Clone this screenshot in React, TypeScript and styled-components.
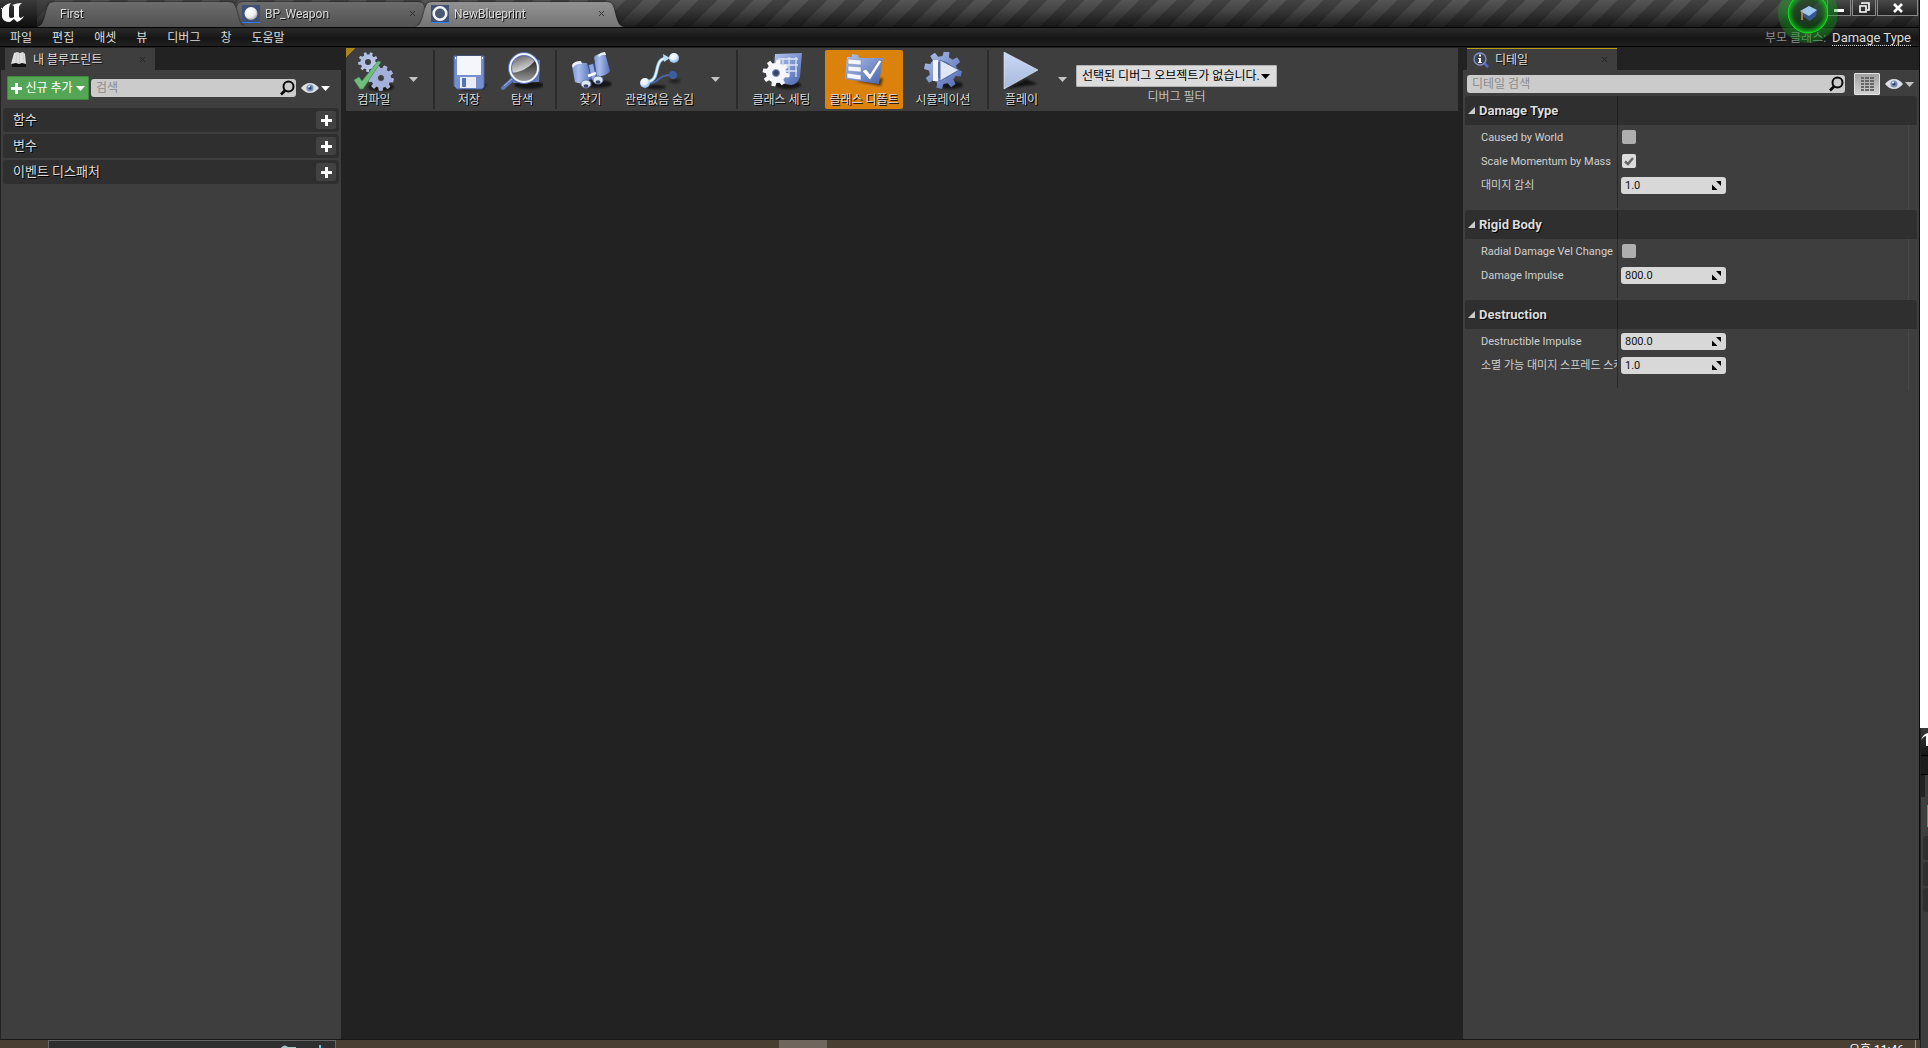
import React from "react";
import styled, { createGlobalStyle, css } from "styled-components";

const font = `Roboto, "Noto Sans CJK KR", sans-serif`;

const GlobalStyle = createGlobalStyle`
  *, *::before, *::after { box-sizing: border-box; }
  body { margin: 0; background: #fff; overflow: hidden; }
  button, input, select { font: inherit; color: inherit; }
  button { border: 0; padding: 0; background: none; cursor: pointer; }
  svg { display: block; flex: none; }
`;

/* ---------- shell ---------- */

const Desktop = styled.div`
  display: grid;
  grid-template-columns: minmax(0, 1fr) 8px;
  height: 100vh;
  overflow: hidden;
  font: 12px/16px ${font};
  color: #dcdcdc;
`;

const Screen = styled.div`
  display: flex;
  flex-direction: column;
  min-width: 0;
`;

const EditorWindow = styled.main`
  flex: 1;
  min-height: 0;
  display: flex;
  flex-direction: column;
  background: #222;
  border-right: 1px solid #0c0c0c;
  border-bottom: 1px solid #181818;
`;

/* ---------- title bar ---------- */

const TitleBar = styled.header`
  position: relative;
  display: flex;
  height: 28px;
  border-bottom: 1px solid #000;
  background:
    linear-gradient(#0000 0%, #0003 40%, #000a 100%),
    repeating-linear-gradient(135deg, #424242 0 13px, #555 13px 26px);
`;

const Brand = styled.div`
  width: 37px;
  height: 27px;
  padding-left: 1px;
  background: linear-gradient(#3a3a3a, #0e0e0e);
`;

const Tabs = styled.nav`
  display: flex;
  flex: 1;
  padding-top: 2px;
`;

const TabEdge = styled.div<{ $level: number }>`
  position: relative;
  z-index: ${(p) => p.$level};
  width: 209px;
  height: 25px;
  margin-right: -20px;
  filter: drop-shadow(0 0 1px #111);
`;

const TabBody = styled.div<{ $active?: boolean; $plain?: boolean }>`
  display: flex;
  align-items: center;
  gap: 5px;
  height: 25px;
  padding: 0 19px 2px ${(p) => (p.$plain ? 23 : 16)}px;
  clip-path: path("M0 25 C9 24 8 5 13 1 Q15 0 18 0 L191 0 Q194 0 196 1 C201 5 200 24 209 25 Z");
  background: ${(p) => (p.$active ? "linear-gradient(#929292, #747474)" : "linear-gradient(#6c6c6c, #525252)")};
`;

const TabTitle = styled.button`
  flex: 1;
  text-align: left;
  font-size: 12px;
  text-shadow: 1px 1px 0 #111;
`;

const CloseButton = styled.button`
  display: flex;
  opacity: 0.75;
`;

const WindowButtons = styled.div`
  display: flex;
  gap: 1px;
  height: 16px;
  padding-right: 1px;
`;

const WindowButton = styled.button<{ $wide?: boolean }>`
  display: flex;
  justify-content: center;
  align-items: center;
  width: ${(p) => (p.$wide ? 41 : 24)}px;
  height: 16px;
  border: 1px solid #8a8a8a;
  border-top: 0;
  background: linear-gradient(#4a4a4a, #222);
`;

const TutorialButton = styled.button`
  position: absolute;
  top: -17px;
  right: 81px;
  width: 60px;
  height: 60px;
`;

/* ---------- menu bar ---------- */

const MenuBar = styled.div`
  display: flex;
  justify-content: space-between;
  align-items: center;
  height: 19px;
  padding: 0 8px 0 10px;
  border-bottom: 1px solid #000;
  background: linear-gradient(#2a2a2a, #161616 55%, #202020);
`;

const MenuItems = styled.nav`
  display: flex;
  gap: 20px;
`;

const MenuItem = styled.button`
  padding-top: 2px;
  line-height: 16px;
`;

const ParentClass = styled.div`
  display: flex;
  gap: 6px;
  align-items: center;
  padding-top: 1px;
  color: #8c8c8c;
  line-height: 16px;
`;

const ClassLink = styled.a`
  font-size: 13px;
  line-height: 15px;
  color: #dcdcdc;
  text-decoration: none;
  border-bottom: 1px dotted #ddd;
`;

/* ---------- workspace ---------- */

const Workspace = styled.div`
  flex: 1;
  min-height: 0;
  display: flex;
  gap: 5px;
  padding: 1px 0 0 1px;
`;

const Dock = styled.section<{ $width: number }>`
  flex: none;
  display: flex;
  flex-direction: column;
  width: ${(p) => p.$width}px;
`;

const PanelTab = styled.div<{ $focused?: boolean }>`
  display: flex;
  align-items: center;
  gap: 6px;
  width: 150px;
  height: 22px;
  margin-left: 4px;
  padding: 0 9px 0 6px;
  background: #3e3e3e;
  border-top: 1px solid #3e3e3e;
  ${(p) =>
    p.$focused &&
    css`
      border-top-color: #b9a012;
    `}
`;

const PanelTitle = styled.h2`
  flex: 1;
  margin: 0;
  font-size: 12px;
  font-weight: 400;
  text-shadow: 1px 1px 0 #111;
`;

const PanelBody = styled.div`
  flex: 1;
  background: #3e3e3e;
`;

const SearchBar = styled.div<{ $tall?: boolean }>`
  display: flex;
  align-items: center;
  height: ${(p) => (p.$tall ? 38 : 26)}px;
  padding: ${(p) => (p.$tall ? "0 11px 2px 6px" : "2px 5px 0 4px")};
`;

const AddButton = styled.button`
  display: flex;
  align-items: center;
  justify-content: center;
  gap: 3px;
  width: 82px;
  height: 24px;
  margin-right: 2px;
  border: 1px solid #3d8a3f;
  border-radius: 1px;
  background: #54a656;
  color: #fff;
`;

const SearchField = styled.label`
  flex: 1;
  min-width: 0;
  display: flex;
  align-items: center;
  height: 18px;
  padding: 0 1px 0 5px;
  border-radius: 3px;
  background: #cbcbcb;
`;

const SearchInput = styled.input`
  flex: 1;
  min-width: 0;
  padding: 0;
  border: 0;
  outline: 0;
  background: none;
  color: #222;
  &::placeholder {
    color: #8c8c8c;
    opacity: 1;
  }
`;

const ViewButton = styled.button`
  display: flex;
  align-items: center;
  gap: 2px;
  margin-left: 5px;
`;

const ListButton = styled.button`
  display: flex;
  align-items: center;
  justify-content: center;
  width: 26px;
  height: 22px;
  margin-left: 9px;
  border: 1px solid #e4e4e4;
  border-radius: 1px;
  background: linear-gradient(#a2a2a2, #d0d0d0);
`;

const Sections = styled.ul`
  display: flex;
  flex-direction: column;
  gap: 2px;
  margin: 0;
  padding: 0 2px;
  list-style: none;
`;

const SectionRow = styled.li`
  display: flex;
  align-items: center;
  justify-content: space-between;
  height: 24px;
  padding: 0 3px 0 10px;
  border-radius: 3px;
  background: #2f2f2f;
  font-size: 13px;
  text-shadow: 1px 1px 0 #000;
`;

const PlusButton = styled.button`
  display: flex;
  align-items: center;
  justify-content: center;
  width: 20px;
  height: 18px;
  border-radius: 2px;
  background: #424242;
`;

/* ---------- toolbar ---------- */

const Center = styled.section`
  flex: 1;
  min-width: 0;
  display: flex;
  flex-direction: column;
`;

const Toolbar = styled.div`
  display: flex;
  align-items: flex-start;
  height: 63px;
  padding: 2px 0;
  background: linear-gradient(135deg, #a8861c 0 7px, #3e3e3e 7px);
`;

const ToolGroup = styled.div<{ $width?: number }>`
  display: flex;
  height: 59px;
  width: ${(p) => p.$width}px;
  & + & {
    border-left: 2px solid #2a2a2a;
  }
`;

const ToolButton = styled.button<{ $width: number; $selected?: boolean }>`
  flex: none;
  display: flex;
  flex-direction: column;
  align-items: center;
  width: ${(p) => p.$width}px;
  height: 59px;
  padding-top: 2px;
  border-radius: 2px;
  white-space: nowrap;
  text-shadow: 1px 1px 0 #000;
  background: ${(p) => (p.$selected ? "#da820c" : "none")};
`;

const ToolMenu = styled.button<{ $width: number }>`
  display: flex;
  align-items: center;
  justify-content: center;
  width: ${(p) => p.$width}px;
  height: 59px;
`;

const DebugFilter = styled.div`
  display: flex;
  flex-direction: column;
  align-items: center;
  gap: 2px;
  padding: 15px 0 0 6px;
  color: #c0c0c0;
`;

const SelectWrap = styled.div`
  position: relative;
  width: 201px;
  & > svg {
    position: absolute;
    top: 9px;
    right: 7px;
    pointer-events: none;
  }
`;

const DebugSelect = styled.select`
  display: block;
  width: 100%;
  height: 22px;
  padding: 0 4px 0 5px;
  border: 1px solid #b2b2b2;
  border-radius: 1px;
  appearance: none;
  background: #dcdcdc;
  color: #000;
`;

const Viewport = styled.div`
  flex: 1;
  background: #222;
`;

/* ---------- details ---------- */

const Properties = styled.div`
  padding: 0 2px;
`;

const Category = styled.section`
  padding-bottom: 13px;
  background: linear-gradient(#282828, #282828) 152px 0 / 1px calc(100% - 2px) no-repeat,
    linear-gradient(#484848, #484848) calc(100% - 8px) 0 / 1px 100% no-repeat;
`;

const CategoryHeader = styled.h3`
  display: flex;
  align-items: center;
  gap: 4px;
  height: 29px;
  margin: 0;
  padding-left: 3px;
  border-radius: 3px 3px 0 0;
  background: linear-gradient(#1e1e1e, #1e1e1e) 152px 0 / 1px 100% no-repeat, #2f2f2f;
  font-size: 13px;
  font-weight: 700;
  text-shadow: 1px 1px 0 #000;
`;

const PropertyRow = styled.div`
  display: grid;
  grid-template-columns: 152px 1fr;
  align-items: center;
  height: 24px;
  font-size: 11px;
`;

const PropertyLabel = styled.label`
  padding: 1px 0 0 16px;
  overflow: hidden;
  white-space: nowrap;
  color: #d0d0d0;
`;

const PropertyValue = styled.div`
  display: flex;
  padding-left: 4px;
`;

const NumberBox = styled.div`
  display: flex;
  align-items: center;
  width: 105px;
  height: 17px;
  padding: 0 5px 0 4px;
  border-radius: 3px;
  background: #d8d8d8;
`;

const NumberInput = styled.input`
  flex: 1;
  min-width: 0;
  padding: 1px 0 0;
  border: 0;
  outline: 0;
  background: none;
  color: #111;
`;

const CheckWrap = styled.span`
  position: relative;
  display: block;
  width: 14px;
  height: 14px;
  margin-left: 1px;
  & > svg {
    position: absolute;
    inset: 0;
    pointer-events: none;
  }
  & > input:not(:checked) + svg {
    display: none;
  }
`;

const CheckInput = styled.input`
  display: block;
  appearance: none;
  width: 14px;
  height: 14px;
  margin: 0;
  border-radius: 2px;
  background: #aeaeae;
  &:checked {
    background: #dcdcdc;
  }
`;

/* ---------- taskbar and neighbouring window ---------- */

const Taskbar = styled.footer`
  display: flex;
  height: 8px;
  padding-left: 48px;
  overflow: hidden;
  background: #483e32;
`;

const TaskSearch = styled.div`
  display: flex;
  justify-content: flex-end;
  gap: 20px;
  width: 288px;
  padding: 4px 13px 0 0;
  border: 1px solid #666;
  border-bottom: 0;
  background: #2f2f2f;
`;

const TaskItem = styled.div`
  width: 48px;
  margin-left: 443px;
  background: #6f665e;
`;

const Clock = styled.time`
  height: 8px;
  margin-left: auto;
  padding: 2px 11px 0 0;
  margin-right: 4px;
  border-right: 1px solid #9a9184;
  line-height: 16px;
  color: #fff;
`;

const Beside = styled.div`
  display: flex;
  flex-direction: column;
  justify-content: flex-end;
  overflow: hidden;
`;

const BesideWindow = styled.div`
  height: 320px;
  background: #3e3e3e;
  border-left: 1px solid #222;
`;

const BesideTitle = styled.div`
  height: 28px;
  border-bottom: 1px solid #000;
  background: linear-gradient(#3a3a3a, #151515);
`;

const BesideMenu = styled.div`
  height: 19px;
  border-bottom: 1px solid #000;
  background: #1c1c1c;
`;

const BesideTab = styled.div`
  width: 4px;
  height: 22px;
  margin-bottom: 8px;
  background: #222;
`;

const BesideAdd = styled.div`
  width: 1px;
  height: 22px;
  margin: 0 0 9px auto;
  background: #54a656;
`;

const BesideRow = styled.div`
  height: 24px;
  margin: 0 0 2px 2px;
  border-radius: 3px 0 0 3px;
  background: #2f2f2f;
`;

/* ---------- icons ---------- */

function gearPath(cx: number, cy: number, outer: number, inner: number, hole: number, teeth = 8) {
  const pts: string[] = [];
  const step = (Math.PI * 2) / teeth;
  for (let i = 0; i < teeth; i++) {
    const a = i * step + 0.2;
    const at = (r: number, t: number) => `${(cx + r * Math.cos(t)).toFixed(2)} ${(cy + r * Math.sin(t)).toFixed(2)}`;
    pts.push(at(inner, a - step * 0.3), at(outer, a - step * 0.19), at(outer, a + step * 0.19), at(inner, a + step * 0.3));
  }
  return `M${pts.join("L")}ZM${cx - hole} ${cy}a${hole} ${hole} 0 1 0 ${hole * 2} 0a${hole} ${hole} 0 1 0 ${-hole * 2} 0Z`;
}

const HiddenSvg = styled.svg`
  position: absolute;
`;

const Defs = () => (
  <HiddenSvg width="0" height="0" aria-hidden>
    <defs>
      <linearGradient id="blue" x1="0" y1="0" x2="1" y2="1">
        <stop offset="0" stopColor="#b4c6ee" />
        <stop offset="1" stopColor="#4964ac" />
      </linearGradient>
      <linearGradient id="barrel" x1="0" y1="0" x2="1" y2="0">
        <stop offset="0" stopColor="#7d97d6" />
        <stop offset=".35" stopColor="#a9bdec" />
        <stop offset="1" stopColor="#5671b6" />
      </linearGradient>
      <linearGradient id="pale" x1="0" y1="0" x2="1" y2="1">
        <stop offset="0" stopColor="#a9b8e2" />
        <stop offset="1" stopColor="#c3cdeb" />
      </linearGradient>
      <linearGradient id="play" x1="0" y1="0" x2="0" y2="1">
        <stop offset="0" stopColor="#c9d8f4" />
        <stop offset="1" stopColor="#a8b9dc" />
      </linearGradient>
      <linearGradient id="glass" x1=".2" y1="0" x2=".5" y2="1">
        <stop offset="0" stopColor="#5a5a5a" />
        <stop offset=".6" stopColor="#d4d4d4" />
        <stop offset="1" stopColor="#eee" />
      </linearGradient>
      <linearGradient id="ground" x1="0" y1="0" x2="0" y2="1">
        <stop offset="0" stopColor="#2c2c2c" />
        <stop offset="1" stopColor="#9a9a9a" />
      </linearGradient>
      <radialGradient id="ball" cx=".4" cy=".3" r=".7">
        <stop offset="0" stopColor="#fff" />
        <stop offset=".5" stopColor="#e4f2ff" />
        <stop offset="1" stopColor="#7fb2e4" />
      </radialGradient>
      <radialGradient id="sphere" cx=".4" cy=".35" r=".7">
        <stop offset="0" stopColor="#fff" />
        <stop offset=".6" stopColor="#f0f0f0" />
        <stop offset="1" stopColor="#9c9c9c" />
      </radialGradient>
      <radialGradient id="glow">
        <stop offset="0" stopColor="#1c2c1e" stopOpacity=".3" />
        <stop offset=".45" stopColor="#0c5a12" stopOpacity=".5" />
        <stop offset=".63" stopColor="#10b01a" stopOpacity=".9" />
        <stop offset=".66" stopColor="#13e01e" />
        <stop offset=".69" stopColor="#12a01c" stopOpacity=".5" />
        <stop offset="1" stopColor="#12a01c" stopOpacity=".35" />
      </radialGradient>
      <filter id="soft" x="-30%" y="-30%" width="160%" height="160%">
        <feGaussianBlur stdDeviation="1.2" />
      </filter>
    </defs>
  </HiddenSvg>
);

const Art = ({ children }: { children: React.ReactNode }) => (
  <svg width="42" height="40" viewBox="0 0 42 40" aria-hidden>
    {children}
  </svg>
);

const Shade = ({ cx = 24, cy = 34, rx = 15, ry = 4 }) => (
  <ellipse cx={cx} cy={cy} rx={rx} ry={ry} fill="#000" opacity=".65" filter="url(#soft)" />
);

const CompileIcon = () => (
  <Art>
    <Shade cx={28} cy={35} rx={13} />
    <path d={gearPath(15, 10, 10, 7.5, 3, 9)} fill="url(#pale)" fillRule="evenodd" />
    <path d={gearPath(28, 26, 12.5, 9.5, 3.5, 9)} fill="#a3b0dc" stroke="#c2cdf0" strokeWidth=".7" fillRule="evenodd" />
    <path d="M1 28l5-3 3 4L25 9l3 1L10 37H7z" fill="#6fbf7c" stroke="#438650" strokeWidth=".6" />
  </Art>
);

const SaveIcon = () => (
  <Art>
    <path d="M12 36l27-4-4 5-20 1z" fill="#000" opacity=".7" filter="url(#soft)" />
    <path d="M6 4h30v31l-2 2H9l-3-3z" fill="#7590cd" stroke="#4c66a8" />
    <path d="M9 4h24v19H9z" fill="#f4f6fb" />
    <path d="M12 25h16v11H12z" fill="#e9ecf4" />
    <path d="M14 26h4v9h-4z" fill="#5473bc" />
    <path d="M7 5h1v2H7zM34 5h1v2h-1z" fill="#fff" />
  </Art>
);

const BrowseIcon = () => (
  <Art>
    <Shade cx={28} cy={33} />
    <path d="M9 9l4-1v-3l8 1 18 2-1 22-26 1z" fill="#6079b8" />
    <path d="M13 26L2 36" stroke="#5c76b8" strokeWidth="4" strokeLinecap="round" />
    <path d="M12 26L3 34" stroke="#a9bce8" strokeWidth="1" />
    <circle cx="23" cy="16" r="14" fill="url(#glass)" stroke="#5872b0" strokeWidth="4" />
    <path d="M10 21Q24 20 34 9Q40 20 32 26Q22 33 13 26z" fill="url(#ground)" />
    <circle cx="23" cy="16" r="14" fill="none" stroke="#f2f6ff" strokeWidth="2" />
  </Art>
);

const FindIcon = () => (
  <Art>
    <Shade cx={27} cy={32} rx={15} ry={4} />
    <path d="M15 14l10-3 4 14-13 4z" fill="#3e5594" />
    <path d="M19 13l4-1 3 14-4 2z" fill="#90a8df" />
    <path d="M2 14Q7 10 17 11l4 15Q13 34 5 30z" fill="url(#barrel)" />
    <path d="M24 5Q28 1 35 1l5 18q-4 6-13 5z" fill="url(#barrel)" />
    <path d="M2 13q2-4 9-4l1 3q-6-1-9 4zM28 3q3-3 7-3l1 3q-4-1-7 2z" fill="#eef2fb" />
    <path d="M18 24l8-3" stroke="#fff" strokeWidth="2.500" />
    <ellipse cx="16" cy="32" rx="5" ry="4" fill="#dfe7f7" stroke="#6d7da8" />
    <ellipse cx="28" cy="28" rx="5" ry="4" fill="#dfe7f7" stroke="#6d7da8" />
    <ellipse cx="16" cy="34" rx="2.500" ry="1.800" fill="#33446e" />
    <ellipse cx="28" cy="30" rx="2.500" ry="1.800" fill="#33446e" />
  </Art>
);

const HideIcon = () => (
  <Art>
    <Shade cx={17} cy={35} rx={10} ry={2} />
    <ellipse cx="36" cy="29" rx="6" ry="2" fill="#111" opacity=".6" filter="url(#soft)" />
    <path d="M7 31c16 1 9-8 26-8" fill="none" stroke="#4a67a6" strokeWidth="2" />
    <circle cx="34" cy="23" r="4" fill="#3f5c9e" />
    <path d="M6 30c18 0 6-23 22-24" fill="none" stroke="#7fb5dc" strokeWidth="3.5" />
    <path d="M6 30c18 0 6-23 22-24" fill="none" stroke="#e8f6ff" strokeWidth="1.8" />
    <path d="M24 2l7 4-6 4z" fill="#b9dcf5" />
    <circle cx="35" cy="6" r="5" fill="url(#ball)" />
    <circle cx="6" cy="31" r="5" fill="url(#ball)" />
  </Art>
);

const SettingsIcon = () => (
  <Art>
    <Shade cx={27} cy={33} rx={13} />
    <path d="M14 2l27-1-2 24q-3 8-9 8L12 30z" fill="url(#blue)" />
    <path d="M17 7h20M17 13h20M23 19h13M22 6v14M28 5v20M35 5v20" stroke="#dbe5fa" strokeWidth="1.3" />
    <path d={gearPath(15, 21, 13.5, 10, 3.5)} fill="#f5f7fc" fillRule="evenodd" />
    <circle cx="15" cy="21" r="3.5" fill="#34466f" stroke="#8a9cc4" />
  </Art>
);

const DefaultsIcon = () => (
  <Art>
    <path d="M12 29l26 5 2-8z" fill="#000" opacity=".6" filter="url(#soft)" />
    <path d="M4 5l5 0 0-3 6 1 1 3 24 0-4 26-34-5z" fill="url(#blue)" />
    <path d="M5 7l13 1v5L5 12zM5 14l13 1v5L5 19zM4 21l14 2v5L4 26z" fill="#f4f6fb" stroke="#6f83b4" strokeWidth=".5" />
    <path d="M19 19l4-2 4 5L36 8l3 1L27 28z" fill="#fff" stroke="#556a9d" strokeWidth=".6" />
  </Art>
);

const SimulationIcon = () => (
  <Art>
    <Shade cx={28} cy={33} rx={13} />
    <path d={gearPath(21, 18, 19, 14, 5)} fill="url(#blue)" fillRule="evenodd" />
    <circle cx="21" cy="18" r="9" fill="#5871b0" />
    <path d="M11 8h5v21h-5z" fill="#f1f4fb" />
    <path d="M18 8l19 10-19 11z" fill="#dfe7f7" stroke="#4a5f96" strokeWidth=".8" />
  </Art>
);

const PlayIcon = () => (
  <Art>
    <path d="M4 37l33-5-12-5z" fill="#000" opacity=".7" filter="url(#soft)" />
    <path d="M3 0l34 18L3 37z" fill="url(#play)" stroke="#e6eefb" strokeWidth=".6" />
  </Art>
);

const Caret = ({ color = "#c4c4c4" }) => (
  <svg width="9" height="5" viewBox="0 0 10 5" preserveAspectRatio="none" aria-hidden>
    <path d="M0 0h10L5 5z" fill={color} />
  </svg>
);

const Cross = () => (
  <svg width="7" height="7" viewBox="0 0 7 7" aria-hidden>
    <path d="M1 1l5 5M6 1L1 6" stroke="#1c1c1c" strokeWidth="1" />
  </svg>
);

const Plus = () => (
  <svg width="11" height="11" viewBox="0 0 11 11" aria-hidden>
    <path d="M4 0h3v4h4v3H7v4H4V7H0V4h4z" fill="#fff" />
  </svg>
);

const Magnifier = () => (
  <svg width="15" height="16" viewBox="0 0 15 16" aria-hidden>
    <circle cx="8.500" cy="6.500" r="5" fill="none" stroke="#050505" strokeWidth="2" />
    <path d="M5 10.500L1 14.500" stroke="#050505" strokeWidth="2.600" />
  </svg>
);

const Eye = () => (
  <svg width="18" height="12" viewBox="0 0 18 12" aria-hidden>
    <path d="M0 6Q4 1 9 1t9 5q-4 5-9 5T0 6z" fill="#dcdfe6" />
    <circle cx="9" cy="6" r="3.600" fill="#7a8db6" />
    <circle cx="9" cy="6" r="1.600" fill="#2f3f66" />
    <circle cx="8" cy="4.500" r="1" fill="#e8eefc" />
  </svg>
);

const EngineLogo = () => (
  <svg width="26" height="24" viewBox="0 0 26 24" aria-hidden>
    <path
      d="M1 9Q4 4 10 3 8 5 8 8v8q0 2 2 2t3-1V7q0-2-2-2 5-2 10-2-3 2-3 4v9q0 2 2 2l3-2q-2 4-7 6l-3-3-4 3q-7 0-8-5V8q-1-1-2 1z"
      fill="#fff"
    />
  </svg>
);

const AssetIcon = ({ ring }: { ring?: boolean }) => (
  <svg width="18" height="18" viewBox="0 0 18 18" aria-hidden>
    <path d="M0 0h18v18H0z" fill="#3f5275" />
    {ring ? (
      <circle cx="9" cy="8.500" r="6.300" fill="#4a5872" stroke="#f2f2f2" strokeWidth="2.600" />
    ) : (
      <circle cx="9" cy="8.500" r="6.500" fill="url(#sphere)" />
    )}
    <path d="M0 17h18v1H0z" fill="#2f7bff" />
  </svg>
);

const BookIcon = () => (
  <svg width="16" height="16" viewBox="0 0 16 16" aria-hidden>
    <path d="M1 11h14v4H1z" fill="#111" />
    <path d="M3 1l3-1 3 1 3-1 2 2 1 10-4-1-3 1-3-1-5 1z" fill="#dedede" />
    <path d="M8.500 1v10M6 1L5 11M12 1l1 10" stroke="#bbb" strokeWidth=".5" />
  </svg>
);

const InfoIcon = () => (
  <svg width="16" height="16" viewBox="0 0 16 16" aria-hidden>
    <path d="M10 10l5 5" stroke="#4a6cc0" strokeWidth="2.500" />
    <circle cx="7" cy="7" r="6" fill="#3b4252" stroke="#8094c4" strokeWidth="1.300" />
    <path d="M6 2.500h2v2H6zM5 6h3v4h1v1H5v-1h1V7H5z" fill="#fff" />
  </svg>
);

const Resize = () => (
  <svg width="9" height="9" viewBox="0 0 9 9" aria-hidden>
    <path d="M4 0h5v5zM0 3.500L5.500 9H0z" fill="#000" />
  </svg>
);

/* ---------- data ---------- */

const menus = ["파일", "편집", "애셋", "뷰", "디버그", "창", "도움말"];
const sections = ["함수", "변수", "이벤트 디스패처"];

type Property = { label: string; value: string | boolean };

const categories: { name: string; items: Property[] }[] = [
  {
    name: "Damage Type",
    items: [
      { label: "Caused by World", value: false },
      { label: "Scale Momentum by Mass", value: true },
      { label: "대미지 감쇠", value: "1.0" },
    ],
  },
  {
    name: "Rigid Body",
    items: [
      { label: "Radial Damage Vel Change", value: false },
      { label: "Damage Impulse", value: "800.0" },
    ],
  },
  {
    name: "Destruction",
    items: [
      { label: "Destructible Impulse", value: "800.0" },
      { label: "소멸 가능 대미지 스프레드 스케일", value: "1.0" },
    ],
  },
];

function PropertyEditor({ id, item }: { id: string; item: Property }) {
  return (
    <PropertyRow>
      <PropertyLabel htmlFor={id}>{item.label}</PropertyLabel>
      <PropertyValue>
        {typeof item.value === "boolean" ? (
          <CheckWrap>
            <CheckInput id={id} type="checkbox" defaultChecked={item.value} />
            <svg width="14" height="14" viewBox="0 0 14 14" aria-hidden>
              <path d="M3 7.500L6 10l5-6" fill="none" stroke="#666" strokeWidth="2.500" />
            </svg>
          </CheckWrap>
        ) : (
          <NumberBox>
            <NumberInput id={id} type="text" defaultValue={item.value} />
            <Resize />
          </NumberBox>
        )}
      </PropertyValue>
    </PropertyRow>
  );
}

export default function App() {
  return (
    <Desktop>
      <GlobalStyle />
      <Defs />
      <Screen>
        <EditorWindow>
          <TitleBar>
            <Brand>
              <EngineLogo />
            </Brand>
            <Tabs>
              <TabEdge $level={2}>
                <TabBody $plain>
                  <TabTitle>First</TabTitle>
                </TabBody>
              </TabEdge>
              <TabEdge $level={1}>
                <TabBody>
                  <AssetIcon />
                  <TabTitle>BP_Weapon</TabTitle>
                  <CloseButton aria-label="Close BP_Weapon">
                    <Cross />
                  </CloseButton>
                </TabBody>
              </TabEdge>
              <TabEdge $level={3}>
                <TabBody $active>
                  <AssetIcon ring />
                  <TabTitle>NewBlueprint</TabTitle>
                  <CloseButton aria-label="Close NewBlueprint">
                    <Cross />
                  </CloseButton>
                </TabBody>
              </TabEdge>
            </Tabs>
            <TutorialButton aria-label="Tutorial">
              <svg width="60" height="60" viewBox="0 0 60 60" aria-hidden>
                <circle cx="30" cy="30" r="30" fill="url(#glow)" />
                <path d="M23 29l8-6 8 4-1 6-6 5-6-4z" fill="#35588f" />
                <path d="M22 28l9-5 8 4-8 6z" fill="#9fc8ee" />
                <path d="M24 28v9" stroke="#c79a50" strokeWidth="1.500" />
              </svg>
            </TutorialButton>
            <WindowButtons>
              <WindowButton aria-label="Minimize">
                <svg width="10" height="10" viewBox="0 0 10 10" aria-hidden>
                  <path d="M0 6h10v3H0z" fill="#fff" />
                </svg>
              </WindowButton>
              <WindowButton aria-label="Restore">
                <svg width="11" height="11" viewBox="0 0 11 11" aria-hidden>
                  <path d="M3 2V1h7v7H8M1 4h6v6H1z" fill="none" stroke="#fff" strokeWidth="1.600" />
                </svg>
              </WindowButton>
              <WindowButton $wide aria-label="Close">
                <svg width="10" height="10" viewBox="0 0 10 10" aria-hidden>
                  <path d="M1 1l8 8M9 1L1 9" stroke="#fff" strokeWidth="2.600" />
                </svg>
              </WindowButton>
            </WindowButtons>
          </TitleBar>

          <MenuBar>
            <MenuItems>
              {menus.map((m) => (
                <MenuItem key={m}>{m}</MenuItem>
              ))}
            </MenuItems>
            <ParentClass>
              부모 클래스: <ClassLink href="#damage-type">Damage Type</ClassLink>
            </ParentClass>
          </MenuBar>

          <Workspace>
            <Dock $width={340}>
              <PanelTab>
                <BookIcon />
                <PanelTitle>내 블루프린트</PanelTitle>
                <CloseButton aria-label="Close panel">
                  <Cross />
                </CloseButton>
              </PanelTab>
              <PanelBody>
                <SearchBar $tall>
                  <AddButton>
                    <Plus />
                    신규 추가
                    <Caret color="#fff" />
                  </AddButton>
                  <SearchField>
                    <SearchInput type="text" placeholder="검색" aria-label="검색" />
                    <Magnifier />
                  </SearchField>
                  <ViewButton aria-label="View options">
                    <Eye />
                    <Caret color="#fff" />
                  </ViewButton>
                </SearchBar>
                <Sections>
                  {sections.map((s) => (
                    <SectionRow key={s}>
                      {s}
                      <PlusButton aria-label={`${s} +`}>
                        <Plus />
                      </PlusButton>
                    </SectionRow>
                  ))}
                </Sections>
              </PanelBody>
            </Dock>

            <Center>
              <Toolbar>
                <ToolGroup $width={87}>
                  <ToolButton $width={56}>
                    <CompileIcon />
                    컴파일
                  </ToolButton>
                  <ToolMenu $width={22} aria-label="컴파일 옵션">
                    <Caret />
                  </ToolMenu>
                </ToolGroup>
                <ToolGroup $width={122}>
                  <ToolButton $width={68}>
                    <SaveIcon />
                    저장
                  </ToolButton>
                  <ToolButton $width={38}>
                    <BrowseIcon />
                    탐색
                  </ToolButton>
                </ToolGroup>
                <ToolGroup $width={181}>
                  <ToolButton $width={67}>
                    <FindIcon />
                    찾기
                  </ToolButton>
                  <ToolButton $width={71}>
                    <HideIcon />
                    관련없음 숨김
                  </ToolButton>
                  <ToolMenu $width={41} aria-label="숨김 옵션">
                    <Caret />
                  </ToolMenu>
                </ToolGroup>
                <ToolGroup $width={251}>
                  <ToolButton $width={87}>
                    <SettingsIcon />
                    클래스 세팅
                  </ToolButton>
                  <ToolButton $width={78} $selected>
                    <DefaultsIcon />
                    클래스 디폴트
                  </ToolButton>
                  <ToolButton $width={80}>
                    <SimulationIcon />
                    시뮬레이션
                  </ToolButton>
                </ToolGroup>
                <ToolGroup>
                  <ToolButton $width={65}>
                    <PlayIcon />
                    플레이
                  </ToolButton>
                  <ToolMenu $width={16} aria-label="플레이 옵션">
                    <Caret />
                  </ToolMenu>
                  <DebugFilter>
                    <SelectWrap>
                      <DebugSelect id="debug-object">
                        <option>선택된 디버그 오브젝트가 없습니다.</option>
                      </DebugSelect>
                      <Caret color="#000" />
                    </SelectWrap>
                    <label htmlFor="debug-object">디버그 필터</label>
                  </DebugFilter>
                </ToolGroup>
              </Toolbar>
              <Viewport />
            </Center>

            <Dock $width={456}>
              <PanelTab $focused>
                <InfoIcon />
                <PanelTitle>디테일</PanelTitle>
                <CloseButton aria-label="Close panel">
                  <Cross />
                </CloseButton>
              </PanelTab>
              <PanelBody>
                <SearchBar>
                  <SearchField>
                    <SearchInput type="text" placeholder="디테일 검색" aria-label="디테일 검색" />
                    <Magnifier />
                  </SearchField>
                  <ListButton aria-label="Property matrix">
                    <svg width="13" height="14" viewBox="0 0 13 14" aria-hidden>
                      <path
                        d="M0 1h3M4 1h4M9 1h4M0 4h3M4 4h4M9 4h4M0 7h3M4 7h4M9 7h4M0 10h3M4 10h4M9 10h4M0 13h3M4 13h4M9 13h4"
                        stroke="#666"
                        strokeWidth="2"
                      />
                    </svg>
                  </ListButton>
                  <ViewButton aria-label="View options">
                    <Eye />
                    <Caret />
                  </ViewButton>
                </SearchBar>
                <Properties>
                  {categories.map((c) => (
                    <Category key={c.name}>
                      <CategoryHeader>
                        <svg width="7" height="7" viewBox="0 0 7 7" aria-hidden>
                          <path d="M7 0v7H0z" fill="#ccc" />
                        </svg>
                        {c.name}
                      </CategoryHeader>
                      {c.items.map((item, i) => (
                        <PropertyEditor key={item.label} id={`${c.name.replace(" ", "-")}-${i}`} item={item} />
                      ))}
                    </Category>
                  ))}
                </Properties>
              </PanelBody>
            </Dock>
          </Workspace>
        </EditorWindow>

        <Taskbar>
          <TaskSearch>
            <svg width="18" height="4" viewBox="0 0 18 4" aria-hidden>
              <path d="M0 4q4-6 8-2h8v2z" fill="#a9c4c4" />
            </svg>
            <svg width="4" height="4" viewBox="0 0 4 4" aria-hidden>
              <path d="M1 0h2v4H1z" fill="#52c8e6" />
            </svg>
          </TaskSearch>
          <TaskItem />
          <Clock>오후 11:46</Clock>
        </Taskbar>
      </Screen>

      <Beside aria-hidden>
        <BesideWindow>
          <BesideTitle>
            <svg width="7" height="24" viewBox="0 0 7 24">
              <path d="M0 12Q2 6 7 5v13H5V8Q3 8 0 12z" fill="#fff" />
            </svg>
          </BesideTitle>
          <BesideMenu />
          <BesideTab />
          <BesideAdd />
          <BesideRow />
          <BesideRow />
          <BesideRow />
        </BesideWindow>
      </Beside>
    </Desktop>
  );
}
